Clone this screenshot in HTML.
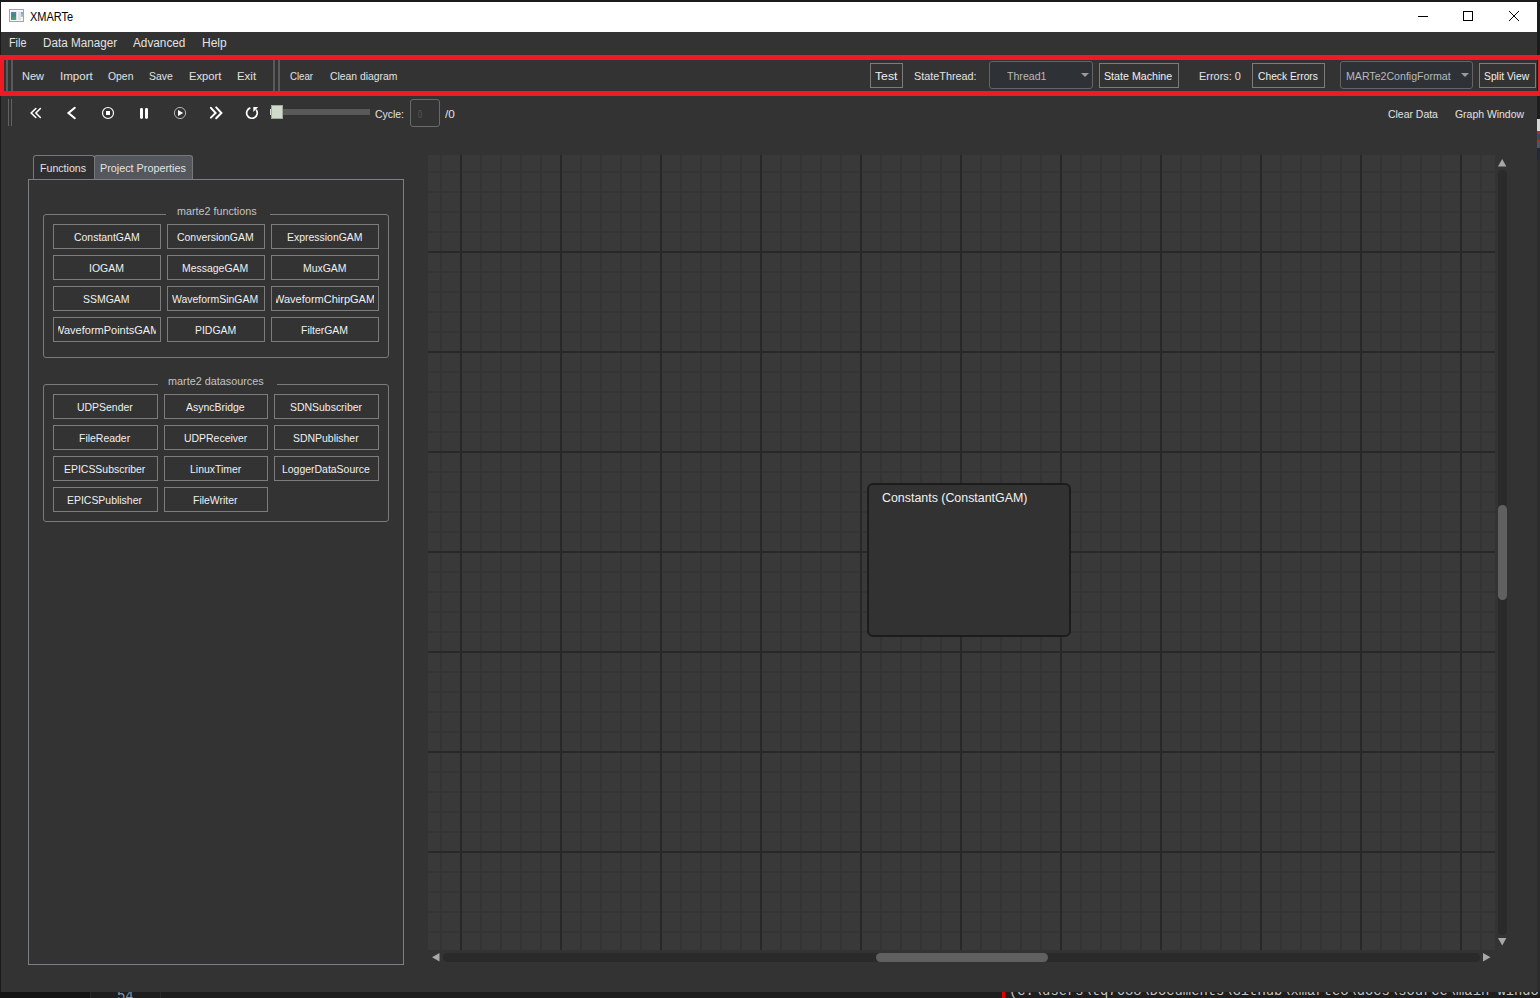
<!DOCTYPE html>
<html><head><meta charset="utf-8"><title>XMARTe</title>
<style>
*{margin:0;padding:0;box-sizing:border-box}
html,body{width:1540px;height:998px;overflow:hidden;background:#1b1b1b;font-family:"Liberation Sans",sans-serif;font-size:12px;color:#e2e2e2}
.a{position:absolute}
.t{position:absolute;white-space:nowrap;transform-origin:0 0}
</style></head><body>
<div class="a" style="left:0px;top:992px;width:1540px;height:6px;background:#1e1e1e"></div>
<div class="a" style="left:0px;top:992px;width:90px;height:6px;background:#141414"></div>
<div class="a" style="left:90px;top:992px;width:1px;height:6px;background:#2a2a2a"></div>
<div class="a" style="left:160px;top:992px;width:1px;height:6px;background:#2a2a2a"></div>
<div class="a" style="left:1002px;top:992px;width:3px;height:6px;background:#e00000"></div>
<div class="t" style="left:117px;top:989px;font-family:'Liberation Mono',monospace;font-size:13.8px;line-height:16px;color:#8a96a8">54</div>
<div class="t" style="left:1009px;top:984px;font-family:'Liberation Mono',monospace;font-size:13.8px;line-height:16px;color:#c4c4c4">(c:\users\tq7638\Documents\GitHub\xmarte3\docs\source\main windo</div>
<div class="a" style="left:1537px;top:96px;width:3px;height:896px;background:#2b2b2b"></div>
<div class="a" style="left:1537px;top:96px;width:3px;height:23px;background:#1e1e1e"></div>
<div class="a" style="left:1537px;top:119px;width:3px;height:12px;background:#d8d8d8"></div>
<div class="a" style="left:1537px;top:131px;width:3px;height:3px;background:#d01c24"></div>
<div class="a" style="left:1537px;top:134px;width:3px;height:6px;background:#3a4a5a"></div>
<div class="a" style="left:1537px;top:140px;width:3px;height:1px;background:#d01c24"></div>
<div class="a" style="left:1537px;top:141px;width:3px;height:7px;background:#4a5666"></div>
<div class="a" style="left:1537px;top:148px;width:3px;height:12px;background:#1e2a3a"></div>
<div class="a" style="left:1px;top:2px;width:1536px;height:990px;background:#333333"></div>
<div class="a" style="left:1px;top:2px;width:1536px;height:30px;background:#ffffff"></div>
<div class="a" style="left:9px;top:9px;width:15px;height:13px;background:#f6f6f8;border:1px solid #a2a5aa"></div>
<div class="a" style="left:11px;top:12px;width:5px;height:8px;background:linear-gradient(160deg,#5a82b8,#3f8a8a 45%,#58a86a)"></div>
<div class="a" style="left:16px;top:12px;width:1px;height:8px;background:#ddd8e8"></div>
<div class="a" style="left:18px;top:12px;width:3px;height:8px;background:#e2e2e2"></div>
<div class="a" style="left:21px;top:12px;width:2px;height:5px;background:linear-gradient(#7aa0d0,#a8d8a8)"></div>
<div class="t" style="left:30.00px;top:10px;font-size:12px;line-height:14px;color:#000000;transform:scaleX(0.9149);">XMARTe</div>
<div class="a" style="left:1418px;top:16px;width:10px;height:1px;background:#000"></div>
<div class="a" style="left:1463px;top:11px;width:10px;height:10px;border:1px solid #000"></div>
<svg class="a" style="left:1508px;top:10px" width="12" height="12" viewBox="0 0 12 12"><path d="M1 1L11 11M11 1L1 11" stroke="#000" stroke-width="1"/></svg>
<div class="t" style="left:9.00px;top:36px;font-size:12px;line-height:14px;color:#e2e2e2;transform:scaleX(0.9000);">File</div>
<div class="t" style="left:43.00px;top:36px;font-size:12px;line-height:14px;color:#e2e2e2;transform:scaleX(0.9737);">Data Manager</div>
<div class="t" style="left:133.00px;top:36px;font-size:12px;line-height:14px;color:#e2e2e2;transform:scaleX(0.9811);">Advanced</div>
<div class="t" style="left:202.00px;top:36px;font-size:12px;line-height:14px;color:#e2e2e2;">Help</div>
<div class="a" style="left:6px;top:60px;width:2px;height:31px;background:#5a5a5a"></div>
<div class="a" style="left:11px;top:60px;width:2px;height:31px;background:#5a5a5a"></div>
<div class="t" style="left:22.00px;top:70px;font-size:11px;line-height:12px;color:#e2e2e2;">New</div>
<div class="t" style="left:59.50px;top:70px;font-size:11px;line-height:12px;color:#e2e2e2;transform:scaleX(1.0484);">Import</div>
<div class="t" style="left:107.50px;top:70px;font-size:11px;line-height:12px;color:#e2e2e2;transform:scaleX(0.9444);">Open</div>
<div class="t" style="left:149.40px;top:70px;font-size:11px;line-height:12px;color:#e2e2e2;transform:scaleX(0.9440);">Save</div>
<div class="t" style="left:189.40px;top:70px;font-size:11px;line-height:12px;color:#e2e2e2;transform:scaleX(1.0187);">Export</div>
<div class="t" style="left:237.30px;top:70px;font-size:11px;line-height:12px;color:#e2e2e2;transform:scaleX(1.0389);">Exit</div>
<div class="a" style="left:273px;top:60px;width:2px;height:31px;background:#5a5a5a"></div>
<div class="a" style="left:278px;top:60px;width:2px;height:31px;background:#5a5a5a"></div>
<div class="t" style="left:290.00px;top:70px;font-size:11px;line-height:12px;color:#e2e2e2;transform:scaleX(0.8778);">Clear</div>
<div class="t" style="left:330.40px;top:70px;font-size:11px;line-height:12px;color:#e2e2e2;transform:scaleX(0.9417);">Clean diagram</div>
<div class="a" style="left:870px;top:63px;width:33px;height:25px;border:1px solid #7c7c7c"></div>
<div class="t" style="left:874.80px;top:70px;font-size:11px;line-height:12px;color:#f0f0f0;transform:scaleX(1.1100);">Test</div>
<div class="t" style="left:913.60px;top:70px;font-size:11px;line-height:12px;color:#e2e2e2;transform:scaleX(0.9844);">StateThread:</div>
<div class="a" style="left:989px;top:61px;width:104px;height:28px;background:#2e3135;border:1px solid #646464;border-radius:3px"></div>
<div class="t" style="left:1007.30px;top:70px;font-size:11px;line-height:12px;color:#b9b9b9;transform:scaleX(0.9634);">Thread1</div>
<svg class="a" style="left:1081px;top:73px" width="8" height="5" viewBox="0 0 8 5"><path d="M0 0H8L4 4Z" fill="#9a9a9a"/></svg>
<div class="a" style="left:1099px;top:63px;width:80px;height:25px;border:1px solid #7c7c7c"></div>
<div class="t" style="left:1104.40px;top:70px;font-size:11px;line-height:12px;color:#f0f0f0;transform:scaleX(0.9700);">State Machine</div>
<div class="t" style="left:1198.50px;top:70px;font-size:11px;line-height:12px;color:#e2e2e2;transform:scaleX(0.9929);">Errors: 0</div>
<div class="a" style="left:1252px;top:63px;width:73px;height:25px;border:1px solid #7c7c7c"></div>
<div class="t" style="left:1257.80px;top:70px;font-size:11px;line-height:12px;color:#f0f0f0;transform:scaleX(0.9338);">Check Errors</div>
<div class="a" style="left:1340px;top:61px;width:133px;height:28px;background:#2e3135;border:1px solid #646464;border-radius:3px"></div>
<div class="t" style="left:1345.70px;top:70px;font-size:11px;line-height:12px;color:#b9b9b9;transform:scaleX(0.9633);">MARTe2ConfigFormat</div>
<svg class="a" style="left:1461px;top:73px" width="8" height="5" viewBox="0 0 8 5"><path d="M0 0H8L4 4Z" fill="#9a9a9a"/></svg>
<div class="a" style="left:1479px;top:63px;width:57px;height:25px;border:1px solid #7c7c7c"></div>
<div class="t" style="left:1484.40px;top:70px;font-size:11px;line-height:12px;color:#f0f0f0;transform:scaleX(0.9375);">Split View</div>
<div class="a" style="left:0px;top:55px;width:1543px;height:41px;border:5px solid #ed1c24;border-left-width:4px"></div>
<div class="a" style="left:8px;top:99px;width:1px;height:27px;background:#626262"></div>
<div class="a" style="left:11px;top:99px;width:1px;height:27px;background:#626262"></div>
<svg class="a" style="left:26px;top:102px" width="20" height="22" viewBox="0 0 20 22"><path d="M35.8 108.5L31.2 113L35.8 117.5M40.4 108.5L35.9 113L40.4 117.5" fill="none" stroke="#fff" stroke-width="1.6" stroke-linecap="round" stroke-linejoin="miter" transform="translate(-26,-102)"/></svg>
<svg class="a" style="left:62px;top:102px" width="20" height="22" viewBox="0 0 20 22"><path d="M74.8 107.8L68.5 113L74.8 118.2" fill="none" stroke="#fff" stroke-width="2.1" stroke-linecap="round" transform="translate(-62,-102)"/></svg>
<svg class="a" style="left:100px;top:102px" width="16" height="22" viewBox="0 0 16 22"><circle cx="8" cy="11" r="5.5" fill="none" stroke="#fff" stroke-width="1.2"/><rect x="6" y="9" width="4" height="4" fill="#fff" transform="translate(0,0)"/></svg>
<svg class="a" style="left:140px;top:107.6px" width="8" height="11" viewBox="0 0 8 11"><rect x="0" y="0" width="3" height="10.7" rx="1.3" fill="#fff"/><rect x="5" y="0" width="3" height="10.7" rx="1.3" fill="#fff"/></svg>
<svg class="a" style="left:172px;top:102px" width="16" height="22" viewBox="0 0 16 22"><circle cx="8" cy="11" r="5.6" fill="none" stroke="#b4b4b4" stroke-width="1"/><path d="M6 8.1V14L11.2 11Z" fill="#fff"/></svg>
<svg class="a" style="left:204px;top:102px" width="22" height="22" viewBox="0 0 22 22"><path d="M210.9 107.8L215.6 113L210.9 117.6M216.2 107.4L221.4 113L216.2 118.3" fill="none" stroke="#fff" stroke-width="2" stroke-linecap="round" transform="translate(-204,-102)"/></svg>
<svg class="a" style="left:242px;top:102px" width="20" height="22" viewBox="0 0 20 22"><path d="M250.3 107.9A5.3 5.3 0 1 0 256.2 109.8" fill="none" stroke="#fff" stroke-width="1.7" transform="translate(-242,-102)"/><path d="M253.3 107.1H258.2L253.3 112Z" fill="#fff" transform="translate(-242,-102)"/></svg>
<div class="a" style="left:270px;top:109px;width:100px;height:6px;background:#595959"></div>
<div class="a" style="left:270px;top:109px;width:2px;height:6px;background:#d0dbc9"></div>
<div class="a" style="left:271px;top:105px;width:12px;height:14px;background:#d0dbc9;border:1px solid #a3a79f"></div>
<div class="t" style="left:374.60px;top:108px;font-size:11px;line-height:12px;color:#e2e2e2;transform:scaleX(0.9484);">Cycle:</div>
<div class="a" style="left:410px;top:99px;width:30px;height:28px;border:1px solid #6a6a6a;border-radius:3px"></div>
<div class="t" style="left:418.00px;top:108px;font-size:11px;line-height:12px;color:#5a5a5a;transform:scaleX(0.6667);">0</div>
<div class="t" style="left:444.80px;top:108px;font-size:11px;line-height:12px;color:#e2e2e2;transform:scaleX(1.0667);">/0</div>
<div class="t" style="left:1387.70px;top:108px;font-size:11px;line-height:12px;color:#e2e2e2;transform:scaleX(0.9491);">Clear Data</div>
<div class="t" style="left:1454.80px;top:108px;font-size:11px;line-height:12px;color:#e2e2e2;transform:scaleX(0.9479);">Graph Window</div>
<div class="a" style="left:28px;top:179px;width:376px;height:786px;border:1px solid #7d8083"></div>
<div class="a" style="left:33px;top:155px;width:62px;height:25px;background:#303030;border:1px solid #76797c;border-bottom:none;border-radius:3px 3px 0 0"></div>
<div class="a" style="left:94px;top:155px;width:99px;height:25px;background:#54575b;border:1px solid #76797c;border-bottom:none;border-radius:3px 3px 0 0"></div>
<div class="a" style="left:28px;top:179px;width:376px;height:1px;background:#7d8083"></div>
<div class="t" style="left:40.40px;top:162px;font-size:11px;line-height:12px;color:#e2e2e2;transform:scaleX(0.9646);">Functions</div>
<div class="t" style="left:100.20px;top:162px;font-size:11px;line-height:12px;color:#e2e2e2;transform:scaleX(0.9818);">Project Properties</div>
<div class="a" style="left:43px;top:214px;width:346px;height:144px;border:1px solid #7a7a7a;border-radius:3px"></div>
<div class="a" style="left:166px;top:214px;width:104px;height:2px;background:#333333"></div>
<div class="t" style="left:176.80px;top:205px;font-size:11px;line-height:12px;color:#c4c4c4;transform:scaleX(0.9780);">marte2 functions</div>
<div class="a" style="left:53px;top:224px;width:108px;height:25px;border:1px solid #7c7c7c"></div>
<div class="t" style="left:73.72px;top:231px;font-size:11px;line-height:12px;color:#f0f0f0;transform:scaleX(0.9500);">ConstantGAM</div>
<div class="a" style="left:167px;top:224px;width:98px;height:25px;border:1px solid #7c7c7c"></div>
<div class="t" style="left:177.03px;top:231px;font-size:11px;line-height:12px;color:#f0f0f0;transform:scaleX(0.9500);">ConversionGAM</div>
<div class="a" style="left:271px;top:224px;width:108px;height:25px;border:1px solid #7c7c7c"></div>
<div class="t" style="left:286.50px;top:231px;font-size:11px;line-height:12px;color:#f0f0f0;transform:scaleX(0.9500);">ExpressionGAM</div>
<div class="a" style="left:53px;top:255px;width:108px;height:25px;border:1px solid #7c7c7c"></div>
<div class="t" style="left:88.92px;top:262px;font-size:11px;line-height:12px;color:#f0f0f0;transform:scaleX(0.9500);">IOGAM</div>
<div class="a" style="left:167px;top:255px;width:98px;height:25px;border:1px solid #7c7c7c"></div>
<div class="t" style="left:182.25px;top:262px;font-size:11px;line-height:12px;color:#f0f0f0;transform:scaleX(0.9500);">MessageGAM</div>
<div class="a" style="left:271px;top:255px;width:108px;height:25px;border:1px solid #7c7c7c"></div>
<div class="t" style="left:302.65px;top:262px;font-size:11px;line-height:12px;color:#f0f0f0;transform:scaleX(0.9500);">MuxGAM</div>
<div class="a" style="left:53px;top:286px;width:108px;height:25px;border:1px solid #7c7c7c"></div>
<div class="t" style="left:83.22px;top:293px;font-size:11px;line-height:12px;color:#f0f0f0;transform:scaleX(0.9500);">SSMGAM</div>
<div class="a" style="left:167px;top:286px;width:98px;height:25px;border:1px solid #7c7c7c"></div>
<div class="t" style="left:172.28px;top:293px;font-size:11px;line-height:12px;color:#f0f0f0;transform:scaleX(0.9500);">WaveformSinGAM</div>
<div class="a" style="left:271px;top:286px;width:108px;height:25px;border:1px solid #7c7c7c"></div>
<div class="a" style="left:276px;top:286px;width:98px;height:25px;overflow:hidden">
<div class="t" style="left:-2.00px;top:7px;font-size:11px;line-height:12px;color:#f0f0f0;transform:scaleX(1.0)">WaveformChirpGAM</div></div>
<div class="a" style="left:53px;top:317px;width:108px;height:25px;border:1px solid #7c7c7c"></div>
<div class="a" style="left:58px;top:317px;width:98px;height:25px;overflow:hidden">
<div class="t" style="left:-4.00px;top:7px;font-size:11px;line-height:12px;color:#f0f0f0;transform:scaleX(1.0)">WaveformPointsGAM</div></div>
<div class="a" style="left:167px;top:317px;width:98px;height:25px;border:1px solid #7c7c7c"></div>
<div class="t" style="left:195.07px;top:324px;font-size:11px;line-height:12px;color:#f0f0f0;transform:scaleX(0.9500);">PIDGAM</div>
<div class="a" style="left:271px;top:317px;width:108px;height:25px;border:1px solid #7c7c7c"></div>
<div class="t" style="left:300.75px;top:324px;font-size:11px;line-height:12px;color:#f0f0f0;transform:scaleX(0.9500);">FilterGAM</div>
<div class="a" style="left:43px;top:384px;width:346px;height:138px;border:1px solid #7a7a7a;border-radius:3px"></div>
<div class="a" style="left:158px;top:384px;width:119px;height:2px;background:#333333"></div>
<div class="t" style="left:168.00px;top:375px;font-size:11px;line-height:12px;color:#c4c4c4;transform:scaleX(0.9837);">marte2 datasources</div>
<div class="a" style="left:53px;top:394px;width:105px;height:25px;border:1px solid #7c7c7c"></div>
<div class="t" style="left:76.97px;top:401px;font-size:11px;line-height:12px;color:#f0f0f0;transform:scaleX(0.9500);">UDPSender</div>
<div class="a" style="left:164px;top:394px;width:104px;height:25px;border:1px solid #7c7c7c"></div>
<div class="t" style="left:186.05px;top:401px;font-size:11px;line-height:12px;color:#f0f0f0;transform:scaleX(0.9500);">AsyncBridge</div>
<div class="a" style="left:274px;top:394px;width:105px;height:25px;border:1px solid #7c7c7c"></div>
<div class="t" style="left:289.90px;top:401px;font-size:11px;line-height:12px;color:#f0f0f0;transform:scaleX(0.9500);">SDNSubscriber</div>
<div class="a" style="left:53px;top:425px;width:105px;height:25px;border:1px solid #7c7c7c"></div>
<div class="t" style="left:79.35px;top:432px;font-size:11px;line-height:12px;color:#f0f0f0;transform:scaleX(0.9500);">FileReader</div>
<div class="a" style="left:164px;top:425px;width:104px;height:25px;border:1px solid #7c7c7c"></div>
<div class="t" style="left:183.68px;top:432px;font-size:11px;line-height:12px;color:#f0f0f0;transform:scaleX(0.9500);">UDPReceiver</div>
<div class="a" style="left:274px;top:425px;width:105px;height:25px;border:1px solid #7c7c7c"></div>
<div class="t" style="left:293.23px;top:432px;font-size:11px;line-height:12px;color:#f0f0f0;transform:scaleX(0.9500);">SDNPublisher</div>
<div class="a" style="left:53px;top:456px;width:105px;height:25px;border:1px solid #7c7c7c"></div>
<div class="t" style="left:64.15px;top:463px;font-size:11px;line-height:12px;color:#f0f0f0;transform:scaleX(0.9500);">EPICSSubscriber</div>
<div class="a" style="left:164px;top:456px;width:104px;height:25px;border:1px solid #7c7c7c"></div>
<div class="t" style="left:189.85px;top:463px;font-size:11px;line-height:12px;color:#f0f0f0;transform:scaleX(0.9500);">LinuxTimer</div>
<div class="a" style="left:274px;top:456px;width:105px;height:25px;border:1px solid #7c7c7c"></div>
<div class="t" style="left:282.30px;top:463px;font-size:11px;line-height:12px;color:#f0f0f0;transform:scaleX(0.9500);">LoggerDataSource</div>
<div class="a" style="left:53px;top:487px;width:105px;height:25px;border:1px solid #7c7c7c"></div>
<div class="t" style="left:67.47px;top:494px;font-size:11px;line-height:12px;color:#f0f0f0;transform:scaleX(0.9500);">EPICSPublisher</div>
<div class="a" style="left:164px;top:487px;width:104px;height:25px;border:1px solid #7c7c7c"></div>
<div class="t" style="left:193.18px;top:494px;font-size:11px;line-height:12px;color:#f0f0f0;transform:scaleX(0.9500);">FileWriter</div>
<div class="a" style="left:428px;top:155px;width:1067px;height:795px;background-color:#393939;background-image:linear-gradient(to right,#282828 2px,transparent 2px),linear-gradient(to bottom,#282828 2px,transparent 2px),linear-gradient(to right,#343434 2px,transparent 2px),linear-gradient(to bottom,#343434 2px,transparent 2px);background-size:100px 100%,100% 100px,20px 100%,100% 20px;background-position:32px 0,0 96px,12px 0,0 16px"></div>
<div class="a" style="left:867px;top:483px;width:204px;height:154px;background:#323232;border:2px solid #1c1c1c;border-radius:6px"></div>
<div class="t" style="left:881.60px;top:491px;font-size:12px;line-height:14px;color:#f2f2f2;transform:scaleX(1.0333);">Constants (ConstantGAM)</div>
<svg class="a" style="left:1497.8px;top:159.2px" width="9" height="8" viewBox="0 0 9 8"><path d="M0 7.5L4.2 0L8.4 7.5Z" fill="#a8a8a8"/></svg>
<div class="a" style="left:1498px;top:170px;width:9px;height:765px;background:#2a2a2a;border-radius:4.5px"></div>
<div class="a" style="left:1498px;top:505px;width:9px;height:95px;background:#606060;border-radius:4.5px"></div>
<svg class="a" style="left:1497.8px;top:938.3px" width="9" height="8" viewBox="0 0 9 8"><path d="M0 0L4.2 7.5L8.4 0Z" fill="#a8a8a8"/></svg>
<svg class="a" style="left:432.3px;top:952.8px" width="8" height="9" viewBox="0 0 8 9"><path d="M7.5 0L0 4.2L7.5 8.4Z" fill="#a8a8a8"/></svg>
<div class="a" style="left:443px;top:953px;width:1037px;height:9px;background:#2a2a2a;border-radius:4.5px"></div>
<div class="a" style="left:876px;top:953px;width:172px;height:9px;background:#606060;border-radius:4.5px"></div>
<svg class="a" style="left:1483.3px;top:953px" width="8" height="9" viewBox="0 0 8 9"><path d="M0 0L7.5 4.2L0 8.4Z" fill="#a8a8a8"/></svg>
</body></html>
